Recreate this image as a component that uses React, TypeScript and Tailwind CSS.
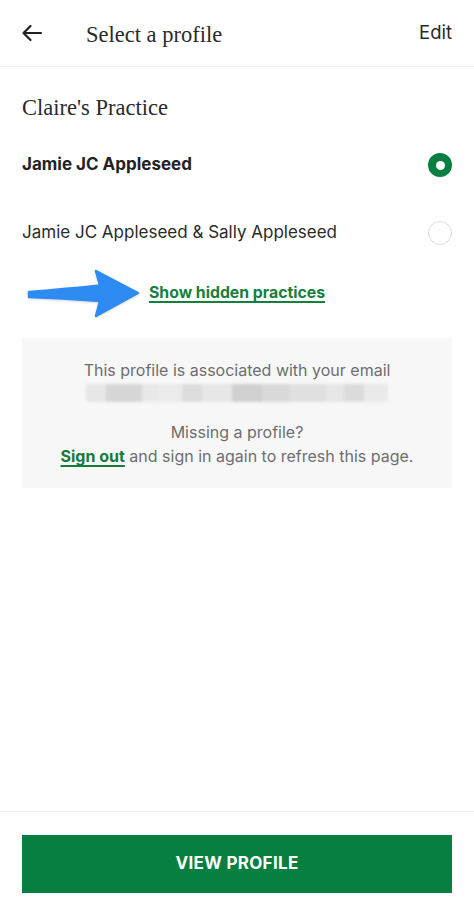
import React from "react";

const sans = { fontFamily: "Inter, 'Liberation Sans', sans-serif" };
const serif = { fontFamily: "'Liberation Serif', 'DejaVu Serif', serif" };

function EmailBlur() {
  const blocks = [
    { w: 20, c: "#e6e6e6" }, { w: 36, c: "#d6d6d6" }, { w: 16, c: "#e8e8e8" }, { w: 24, c: "#ebebeb" },
    { w: 20, c: "#dcdcdc" }, { w: 30, c: "#e7e7e7" }, { w: 30, c: "#d0d0d0" }, { w: 28, c: "#d9d9d9" },
    { w: 36, c: "#e0e0e0" }, { w: 18, c: "#e6e6e6" }, { w: 20, c: "#dbdbdb" }, { w: 24, c: "#eaeaea" },
  ];
  return (
    <div className="mx-auto mt-[2px] flex h-[18px] w-[302px] overflow-hidden blur-[1.5px]">
      {blocks.map((b, i) => (
        <div key={i} className="h-full" style={{ width: b.w, background: b.c }} />
      ))}
    </div>
  );
}

export default function App() {
  return (
    <div className="flex h-[904px] w-[474px] flex-col bg-white text-[#222]" style={sans}>
      <header className="flex h-[67px] shrink-0 items-center border-b border-[#efefef] pl-[20px] pr-[22px]">
        <svg width="24" height="24" viewBox="0 0 24 24" className="mr-[42px]" fill="none" stroke="#222" strokeWidth="2.2" strokeLinecap="round" strokeLinejoin="round">
          <path d="M21 12H3.5M10.5 5L3.5 12L10.5 19" />
        </svg>
        <div className="flex-1 pt-[4px] text-[22.5px] text-[#2a2a2a]" style={serif}>Select a profile</div>
        <div className="text-[18.5px] text-[#2a2a2a]">Edit</div>
      </header>

      <div className="mt-[27px] px-[22px] text-[22.5px] leading-[28px] text-[#2a2a2a]" style={serif}>Claire's Practice</div>

      <div className="mt-[15px] flex h-[56px] items-center justify-between px-[22px]">
        <span className="text-[17px] font-bold text-[#222]">Jamie JC Appleseed</span>
        <div className="flex h-[24px] w-[24px] items-center justify-center rounded-full bg-[#067f40]">
          <div className="h-[9px] w-[9px] rounded-full bg-white" />
        </div>
      </div>

      <div className="mt-[12px] flex h-[56px] items-center justify-between px-[22px]">
        <span className="text-[17px] text-[#2a2a2a]">Jamie JC Appleseed &amp; Sally Appleseed</span>
        <div className="h-[24px] w-[24px] rounded-full border-[1.5px] border-[#dcdcdc]" />
      </div>

      <div className="mt-[5px] flex h-[54px] items-center pl-[22px]">
        <svg width="120" height="54" viewBox="0 0 120 54" className="mr-[7px] drop-shadow-[0_1px_1px_rgba(0,0,0,0.15)]">
          <path
            d="M7,26 Q40,23.5 78,19.5 L74,5 L116,27 L74,50 L78,35 Q40,32 7,31 Z"
            fill="#2d8bf2"
            stroke="#2d8bf2"
            strokeWidth="2.5"
            strokeLinejoin="round"
          />
        </svg>
        <a className="text-[15.8px] font-bold text-[#15803d] underline decoration-[1.5px] underline-offset-[3px]">Show hidden practices</a>
      </div>

      <div className="mx-[22px] mt-[18px] bg-[#f7f7f7] pb-[20px] pt-[20px] text-center text-[16px] leading-[24px] text-[#6e6e6e]">
        <div>This profile is associated with your email</div>
        <EmailBlur />
        <div className="mt-[18px]">Missing a profile?</div>
        <div>
          <a className="font-bold text-[#157a3d] underline decoration-[1.5px] underline-offset-[3px]">Sign out</a> and sign in again to refresh this page.
        </div>
      </div>

      <div className="flex-1" />

      <footer className="shrink-0 border-t border-[#f0f0f0] px-[22px] pb-[11px] pt-[23px]">
        <button className="flex h-[58px] w-full items-center justify-center bg-[#067f40] text-[17px] font-bold tracking-[0.3px] text-white">
          VIEW PROFILE
        </button>
      </footer>
    </div>
  );
}
